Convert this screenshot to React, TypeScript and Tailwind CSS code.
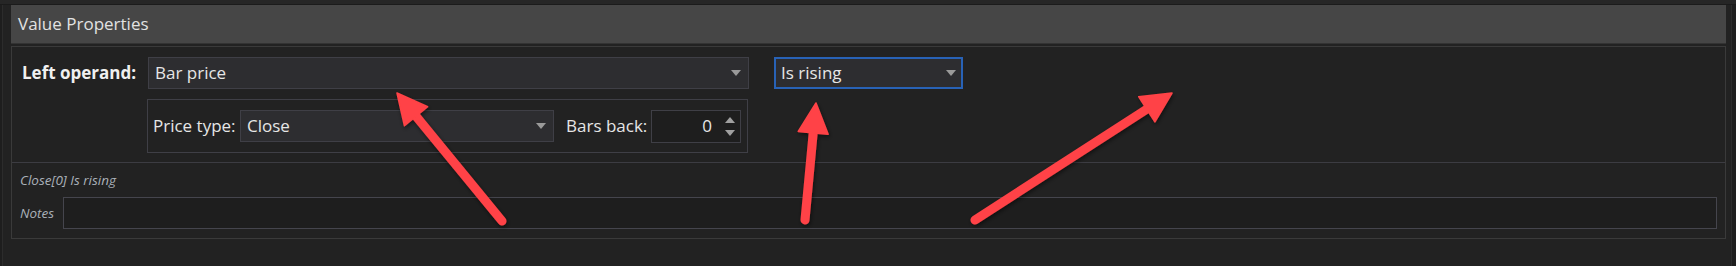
import React from 'react';

type Pt = [number, number];

// red annotation arrow drawn over the screenshot
function Arrow({ tail, tip }: { tail: Pt; tip: Pt }) {
  const dx = tip[0] - tail[0];
  const dy = tip[1] - tail[1];
  const len = Math.hypot(dx, dy);
  const ux = dx / len;
  const uy = dy / len;
  const nx = -uy;
  const ny = ux;
  const headLen = 30;
  const half = 15;
  const bx = tip[0] - ux * headLen;
  const by = tip[1] - uy * headLen;
  const pts = `${tip[0]},${tip[1]} ${bx + nx * half},${by + ny * half} ${bx - nx * half},${by - ny * half}`;
  return (
    <g>
      <line
        x1={tail[0]}
        y1={tail[1]}
        x2={bx + ux * 4}
        y2={by + uy * 4}
        stroke="#ff4346"
        strokeWidth={9}
        strokeLinecap="round"
      />
      <polygon points={pts} fill="#ff4346" stroke="#ff4346" strokeWidth={1.5} strokeLinejoin="round" />
    </g>
  );
}

function Caret() {
  return (
    <svg width="10" height="6" viewBox="0 0 10 6" className="shrink-0">
      <path d="M0 0 H10 L5 6 Z" fill="#9a9a9a" />
    </svg>
  );
}

function Combo({ value, className }: { value: string; className: string }) {
  return (
    <div className={`flex items-center justify-between h-[32px] bg-[#2d2d30] border border-[#3f3f46] pl-[6px] pr-[7px] ${className}`}>
      <span>{value}</span>
      <Caret />
    </div>
  );
}

export default function App() {
  return (
    <div className="relative w-[1736px] h-[266px] bg-[#1e1e1e] overflow-hidden text-[17px] text-[#e6e6e6] font-['Open_Sans',sans-serif]">
      <div className="h-[5px] bg-[#262626] border-b border-[#1b1b1b]" />
      <div className="h-[261px] ml-[2px] w-[1730px] bg-[#222222] border-l border-r border-[#2c2c2c] pl-[8px] pr-[5px]">
        {/* header */}
        <div className="h-[39px] flex items-center pl-[7px] bg-[#464646] border-b border-[#333333] text-[#e2e2e2]">
          Value Properties
        </div>

        {/* body */}
        <div className="mt-[2px] h-[193px] bg-[#222222] border border-[#3a3a3a] flex flex-col">
          <div className="h-[116px] border-b border-[#3c3c42] pt-[10px]">
            <div className="flex items-center h-[32px]">
              <div className="w-[136px] pl-[10px] font-bold text-[#f0f0f0]">Left operand:</div>
              <Combo value="Bar price" className="w-[601px]" />
              <div className="ml-[25px] w-[189px] h-[32px] flex items-center justify-between bg-[#2d2d30] border-2 border-[#2862b6] pl-[5px] pr-[5px]">
                <span>Is rising</span>
                <Caret />
              </div>
            </div>
            <div className="ml-[135px] mt-[10px] w-[601px] h-[54px] border border-[#3f3f46] flex items-center px-[5px]">
              <span className="w-[87px]">Price type:</span>
              <Combo value="Close" className="w-[314px]" />
              <span className="ml-[12px] w-[85px]">Bars back:</span>
              <div className="w-[90px] h-[33px] flex items-center bg-[#1e1e1e] border border-[#3f3f46]">
                <span className="flex-1 text-right pr-[12px]">0</span>
                <div className="w-[16px] flex flex-col items-center gap-[7px] pr-[4px]">
                  <svg width="10" height="6" viewBox="0 0 10 6">
                    <path d="M0 6 H10 L5 0 Z" fill="#a0a0a0" />
                  </svg>
                  <svg width="10" height="6" viewBox="0 0 10 6">
                    <path d="M0 0 H10 L5 6 Z" fill="#a0a0a0" />
                  </svg>
                </div>
              </div>
            </div>
          </div>

          <div className="px-[8px] pt-[8px] text-[13.5px] italic text-[#a9b0b8]">
            <div className="h-[18px] leading-[18px]">Close[0] Is rising</div>
            <div className="mt-[8px] flex items-center h-[32px]">
              <span className="w-[43px]">Notes</span>
              <div className="flex-1 h-[32px] bg-[#1e1e1e] border border-[#45454d]" />
            </div>
          </div>
        </div>
      </div>

      <svg className="absolute inset-0 pointer-events-none" width="1736" height="266">
        <defs>
          <filter id="sh" x="-20%" y="-20%" width="140%" height="140%">
            <feDropShadow dx="1" dy="2" stdDeviation="2" floodColor="#000" floodOpacity="0.5" />
          </filter>
        </defs>
        <g filter="url(#sh)">
          <Arrow tail={[502, 221]} tip={[397, 93]} />
          <Arrow tail={[805, 220]} tip={[816, 103]} />
          <Arrow tail={[975, 220]} tip={[1172, 93]} />
        </g>
      </svg>
    </div>
  );
}
